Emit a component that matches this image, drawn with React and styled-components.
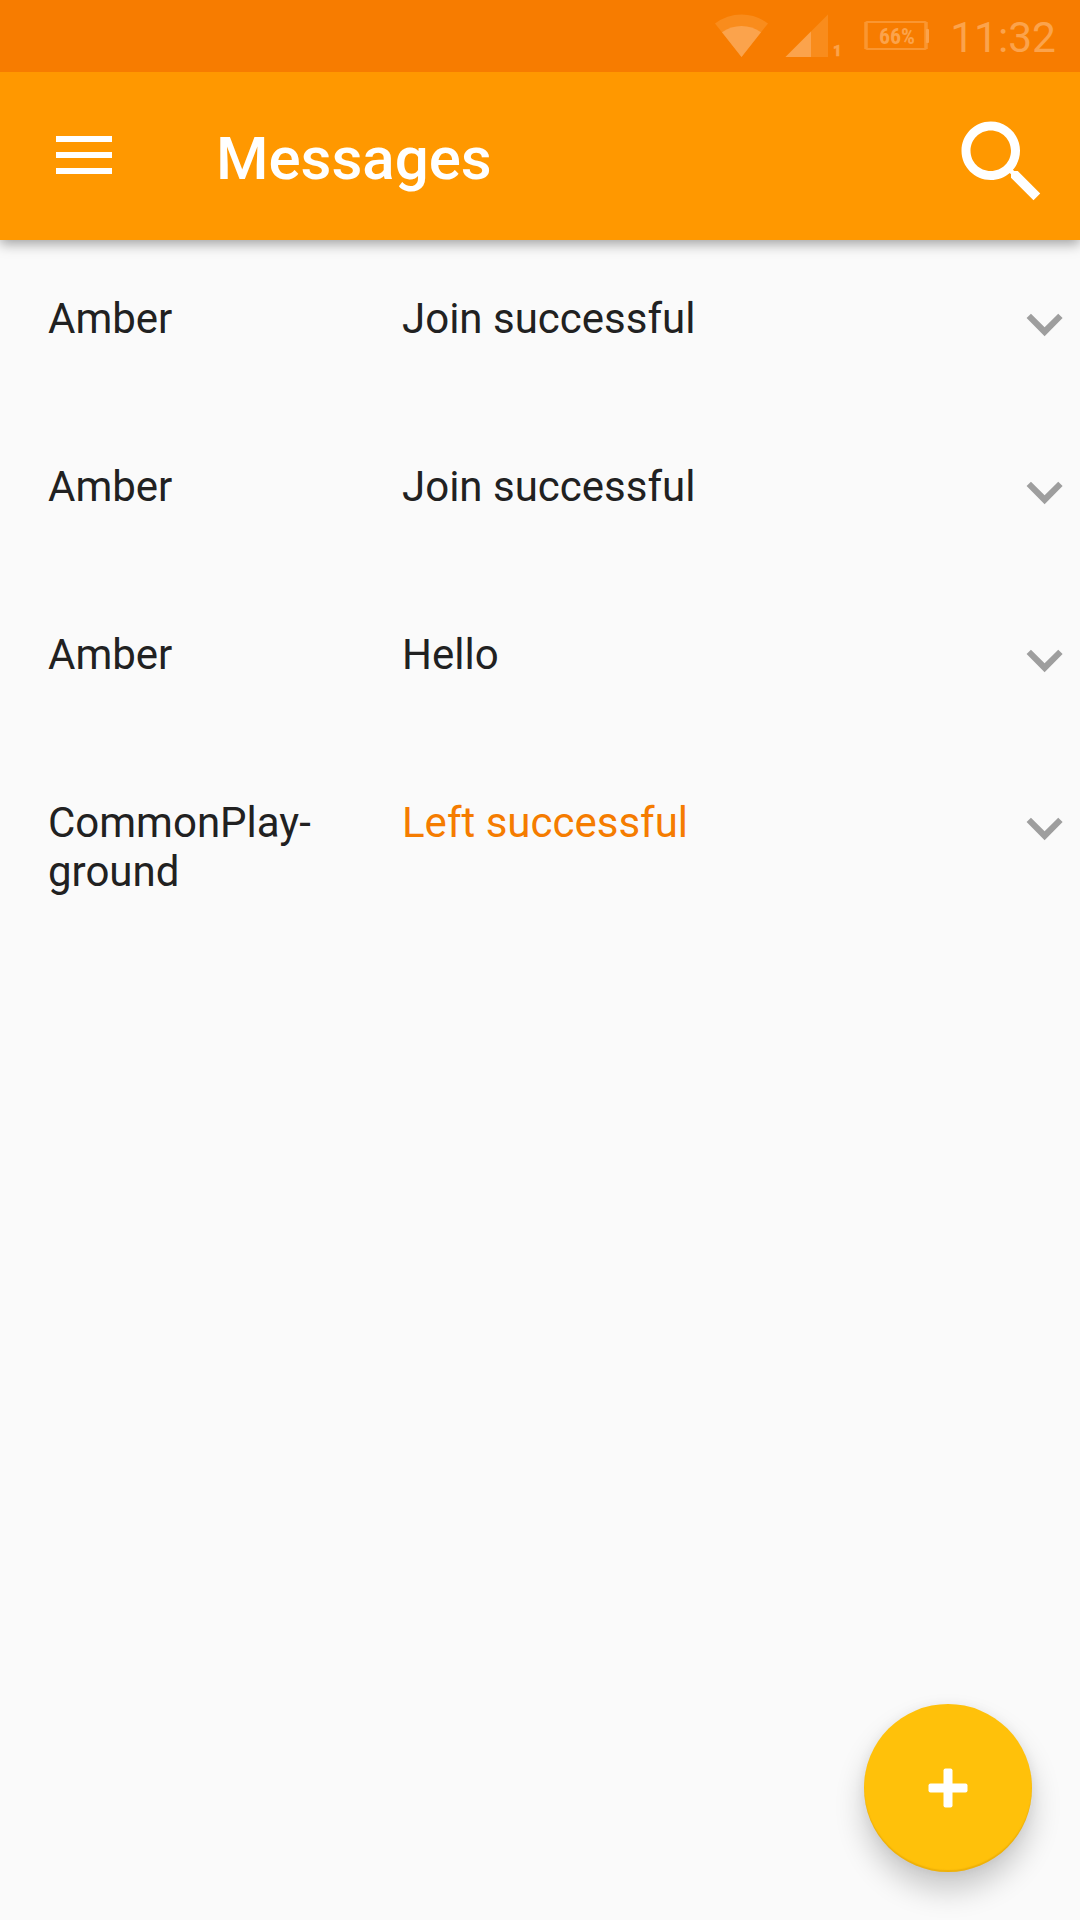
import React from "react";
import styled, { createGlobalStyle } from "styled-components";

const GlobalStyle = createGlobalStyle`
  * { box-sizing: border-box; }
  body {
    margin: 0;
    background: #fafafa;
    font-family: Roboto, "Liberation Sans", sans-serif;
  }
`;

const Screen = styled.div`
  position: relative;
  display: flex;
  flex-direction: column;
  width: 1080px;
  height: 1920px;
  overflow: hidden;
  background: #fafafa;
`;

const StatusBar = styled.header`
  position: relative;
  z-index: 1;
  flex: none;
  display: flex;
  justify-content: flex-end;
  height: 72px;
  padding-right: 24px;
  background: #f77c00;
`;

const StatusIcons = styled.svg`
  display: block;
  width: 230px;
  height: 72px;
  font-family: "Roboto Condensed", Roboto, sans-serif;
  font-weight: 700;
`;

const Clock = styled.time`
  width: 120px;
  padding-top: 13px;
  font-size: 42.5px;
  line-height: 50px;
  text-align: right;
  color: #fba34c;
`;

const AppBar = styled.nav`
  flex: none;
  display: flex;
  height: 168px;
  padding: 0 24px 0 56px;
  background: #ff9800;
  box-shadow: 0 4px 12px rgba(0, 0, 0, 0.36);
`;

const IconButton = styled.button`
  display: block;
  flex: none;
  width: ${(p) => p.$width}px;
  height: ${(p) => p.$height}px;
  margin: ${(p) => p.$top}px 0 0;
  padding: 0;
  border: 0;
  background: none;
  color: ${(p) => p.$color || "#fff"};

  svg {
    display: block;
    width: 100%;
    height: 100%;
    fill: currentColor;
  }
`;

const Title = styled.h1`
  flex: 1;
  margin: 0;
  padding: 52px 0 0 104px;
  font-size: 60px;
  font-weight: 500;
  line-height: 70px;
  color: #fff;
`;

const List = styled.ul`
  margin: 0;
  padding: 0;
  list-style: none;
`;

const Row = styled.li`
  display: grid;
  grid-template-columns: 322px 638px 72px;
  height: 168px;
  padding-left: 48px;
  font-size: 42px;
  line-height: 49px;
  color: #212121;
`;

const Sender = styled.span`
  padding: 54px 32px 0 0;
`;

const Message = styled.span`
  padding: 54px 0 0 32px;
  color: ${(p) => (p.$highlight ? "#f57c00" : "inherit")};
`;

const AddButton = styled.button`
  position: absolute;
  right: 48px;
  bottom: 48px;
  display: flex;
  align-items: center;
  justify-content: center;
  width: 168px;
  height: 168px;
  padding: 0;
  border: 0;
  border-radius: 50%;
  background: #ffc10a;
  box-shadow: 0 18px 30px rgba(0, 0, 0, 0.2), 0 1px 12px rgba(0, 0, 0, 0.06),
    inset 0 -2px 1px rgba(200, 140, 0, 0.3);
`;

const messages = [
  { from: "Amber", text: "Join successful" },
  { from: "Amber", text: "Join successful" },
  { from: "Amber", text: "Hello" },
  { from: "CommonPlay\u00ADground", text: "Left successful", highlight: true },
];

export default function App() {
  return (
    <Screen>
      <GlobalStyle />
      <StatusBar>
        <StatusIcons viewBox="706 0 230 72">
          <path d="M741.5 57 L715 23.5 Q727 14.5 741.5 14.5 Q756 14.5 768 23.5 Z" fill="#f98c1c" />
          <path d="M741.5 57 L722 32.3 Q731 26 741.5 26 Q752 26 761 32.3 Z" fill="#fba34c" />
          <path d="M828 14.5 V57 H785.5 Z" fill="#f98c1c" />
          <path d="M811 31.5 V57 H785.5 Z" fill="#fba34c" />
          <text
            x="833"
            y="56"
            fontSize="15.5"
            textLength="8.5"
            lengthAdjust="spacingAndGlyphs"
            fill="#fba34c"
            stroke="#fba34c"
            strokeWidth="0.7"
          >
            1
          </text>
          <rect x="866" y="22" width="60" height="27" rx="1" fill="none" stroke="#fa9631" strokeWidth="2" />
          <path d="M866 22 V49 M926 22 V49" stroke="#fa9631" strokeWidth="3.5" />
          <rect x="926" y="29" width="3" height="14" rx="1" fill="#fba34c" />
          <text x="879" y="44" fontSize="22" textLength="36" lengthAdjust="spacingAndGlyphs" fill="#fba34c">
            66%
          </text>
        </StatusIcons>
        <Clock>11:32</Clock>
      </StatusBar>
      <AppBar>
        <IconButton $width={56} $height={38} $top={64} aria-label="Menu">
          <svg viewBox="0 0 56 38">
            <path d="M0 0h56v6H0zM0 16h56v6H0zM0 32h56v6H0z" />
          </svg>
        </IconButton>
        <Title>Messages</Title>
        <IconButton $width={108} $height={108} $top={35.5} aria-label="Search">
          <svg viewBox="0 0 24 24">
            <path d="M15.5 14h-.79l-.28-.27C15.41 12.59 16 11.11 16 9.5 16 5.91 13.09 3 9.5 3S3 5.91 3 9.5 5.91 16 9.5 16c1.61 0 3.09-.59 4.23-1.57l.27.28v.79l5 4.99L20.49 19l-4.99-5zm-6 0C7.01 14 5 11.99 5 9.5S7.01 5 9.5 5 14 7.01 14 9.5 11.99 14 9.5 14z" />
          </svg>
        </IconButton>
      </AppBar>
      <List>
        {messages.map((m, i) => (
          <Row key={i}>
            <Sender>{m.from}</Sender>
            <Message $highlight={m.highlight}>{m.text}</Message>
            <IconButton $width={72} $height={72} $top={50} $color="#9e9e9e" aria-label="Expand">
              <svg viewBox="0 0 24 24">
                <path d="M7.65 7.9 L12.2 12.45 L16.75 7.9 L18.2 9.35 L12.2 15.4 L6.2 9.35 Z" />
              </svg>
            </IconButton>
          </Row>
        ))}
      </List>
      <AddButton aria-label="Add">
        <svg width="40" height="40" viewBox="0 0 40 40" fill="#fff">
          <rect x="15.5" y="0.5" width="9" height="39" rx="2" />
          <rect x="0.5" y="15.5" width="39" height="9" rx="2" />
        </svg>
      </AddButton>
    </Screen>
  );
}
